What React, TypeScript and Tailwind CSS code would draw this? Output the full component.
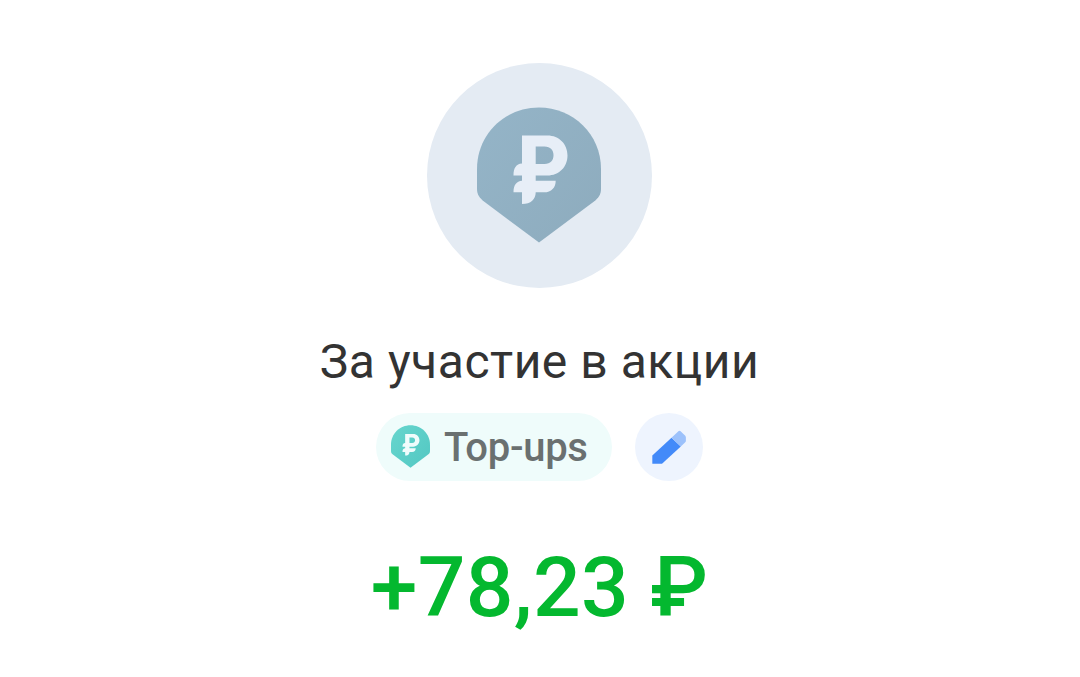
import { useId } from 'react';
import { clsx } from 'clsx';

interface RublePinProps {
  from: string;
  to: string;
  glyph: string;
  className?: string;
}

function RublePin({ from, to, glyph, className }: RublePinProps) {
  const id = useId();
  return (
    <svg viewBox="0 0 124 136" className={clsx('block shrink-0', className)} aria-hidden="true">
      <defs>
        <linearGradient id={id} x1="0" y1="0.1" x2="1" y2="0.9">
          <stop offset="0" stopColor={from} />
          <stop offset="1" stopColor={to} />
        </linearGradient>
      </defs>
      <path
        d="M62 0.5C96 0.5 124 27 124 62V82C124 87.5 121.5 91 117 94.5L62 135.5L7 94.5C2.5 91 0 87.5 0 82V62C0 27 28 0.5 62 0.5Z"
        fill={`url(#${id})`}
      />
      {/* currency mark with the counter cut out */}
      <path
        fillRule="evenodd"
        fill={glyph}
        d="M45 28.5H70.5C82 28.5 90.5 37 90.5 48.5S82 68.5 70.5 68.5H58.7V73.7H78.7C78.7 80.5 74.5 85.3 67 85.3H58.7C58.7 92.5 54 97 45 97V85.3H36.5C36.5 78 39.5 74 45 73.7V68.5H36.5C36.5 61 39 57 45 56.5ZM58.7 39.5V57H67.5C73.5 57 76.5 53.5 76.5 48.3S73.5 39.5 67.5 39.5Z"
      />
    </svg>
  );
}

function PencilIcon() {
  return (
    <svg viewBox="0 0 34 34" className="block size-[34px]" aria-hidden="true">
      <path d="M0.3 25.5L19.5 7.8L28.8 16.5L10 33.7H0.3Z" fill="#438af9" />
      <path
        d="M19.5 7.8L26.4 1.2Q27.5 0.2 28.6 1.2L33 5.4Q33.9 6.4 33.9 7.6V10.4Q33.9 11.6 33 12.5L28.8 16.5Z"
        fill="#9cc1fb"
      />
    </svg>
  );
}

export default function App() {
  return (
    <main className="flex h-[677px] w-[1079px] flex-col items-center bg-white pt-[63px] font-['Roboto',sans-serif]">
      <div className="flex size-[225px] shrink-0 items-center justify-center rounded-full bg-[#e4ebf3] pr-px pb-[2px]">
        <RublePin from="#94b4c7" to="#8eacbe" glyph="#e7eef7" className="h-[136px] w-[124px]" />
      </div>

      <h1 className="mt-[46px] text-[48px] leading-[56px] font-normal tracking-[0.52px] whitespace-nowrap text-[#333333]">
        За участие в акции
      </h1>

      <div className="mt-[23px] flex gap-[23px]">
        <div className="flex h-[68px] w-[236px] items-center rounded-full bg-[#effcfb] pl-[14.5px]">
          <RublePin from="#65d5cd" to="#54c8c3" glyph="#f0fcfc" className="mb-px h-[43px] w-[39px]" />
          <span className="mt-[2px] ml-[14.5px] text-[40px] leading-[48px] font-medium tracking-[-0.3px] whitespace-nowrap text-[#6a7070]">
            Top-ups
          </span>
        </div>
        <button
          aria-label="Edit"
          className="flex size-[68px] items-center justify-center rounded-full bg-[#eef4fe]"
        >
          <PencilIcon />
        </button>
      </div>

      <p className="mt-[58px] text-[84px] leading-[98px] font-medium tracking-[0.3px] whitespace-nowrap text-[#04b82f]">
        +78,23 ₽
      </p>
    </main>
  );
}
